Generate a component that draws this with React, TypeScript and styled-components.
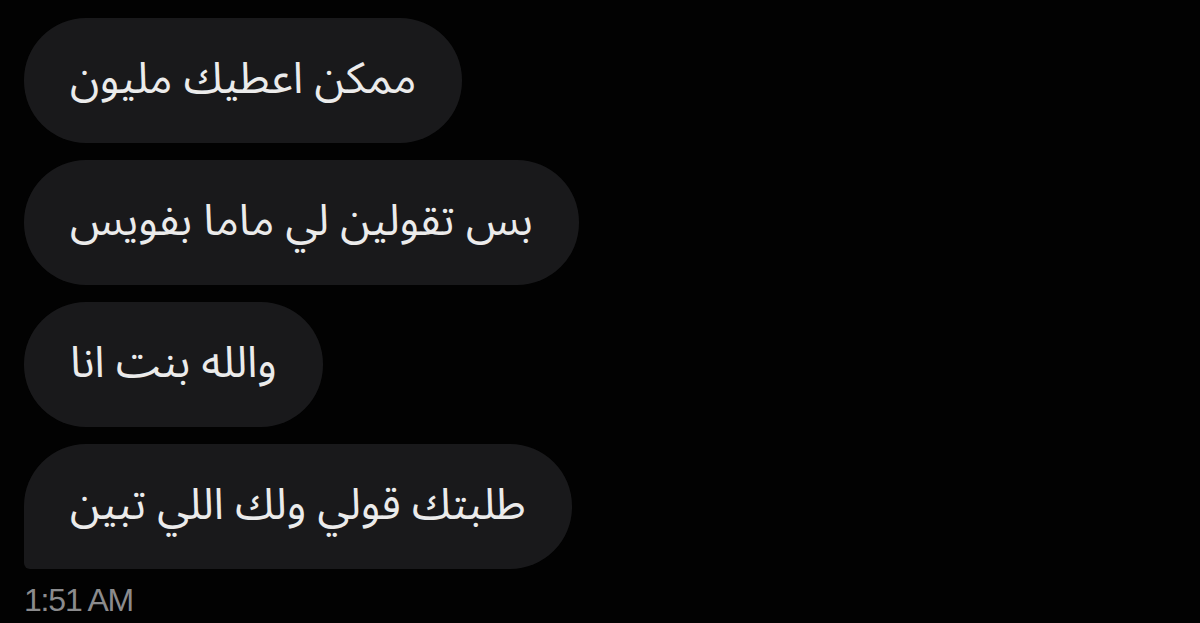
import React from 'react'
import styled, { createGlobalStyle } from 'styled-components'

const GlobalStyle = createGlobalStyle`
  html, body {
    margin: 0;
    padding: 0;
    background: #000;
  }
  body {
    width: 1200px;
    height: 623px;
    overflow: hidden;
  }
`

const Thread = styled.div`
  display: flex;
  flex-direction: column;
  align-items: flex-start;
  gap: 17px;
  padding: 18px 0 0 24px;
  width: 1200px;
  height: 623px;
  box-sizing: border-box;
  background: #020202;
`

const Bubble = styled.div<{ last?: boolean }>`
  display: flex;
  align-items: center;
  justify-content: center;
  height: 125px;
  box-sizing: border-box;
  padding: 0 46px 4px;
  background: #19191b;
  border-radius: ${p => (p.last ? '62px 62px 62px 6px' : '62px')};
  color: #ebebeb;
  font-family: 'Noto Sans Arabic', 'DejaVu Sans', 'Noto Sans', sans-serif;
  font-size: 43.5px;
  direction: rtl;
  white-space: nowrap;
`

const Time = styled.div`
  margin-top: -3px;
  color: #8b8b8d;
  font-family: 'Liberation Sans', Arial, sans-serif;
  font-size: 32px;
  letter-spacing: -1.2px;
  line-height: 34px;
`

const messages = [
  'ممكن اعطيك مليون',
  'بس تقولين لي ماما بفويس',
  'والله بنت انا',
  'طلبتك قولي ولك اللي تبين',
]

export default function App() {
  return (
    <>
      <GlobalStyle />
      <Thread>
        {messages.map((m, i) => (
          <Bubble key={i} last={i === messages.length - 1}>
            {m}
          </Bubble>
        ))}
        <Time>1:51 AM</Time>
      </Thread>
    </>
  )
}
